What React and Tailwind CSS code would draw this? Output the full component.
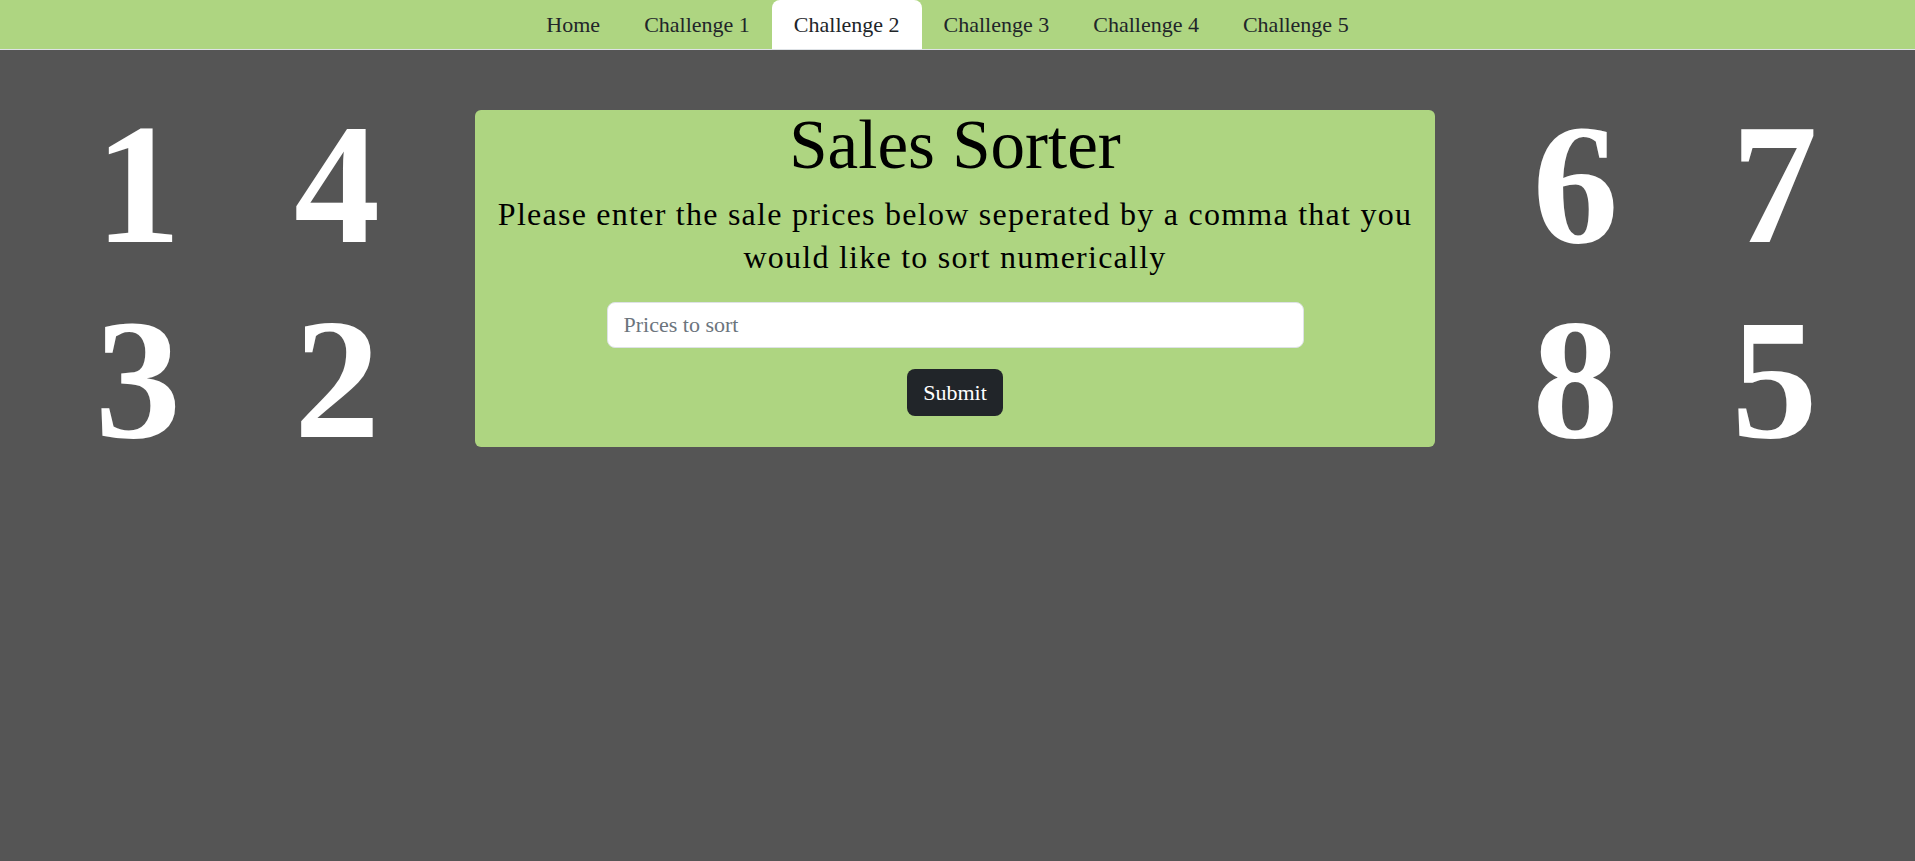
import React from 'react';

const tabs = ['Home', 'Challenge 1', 'Challenge 2', 'Challenge 3', 'Challenge 4', 'Challenge 5'];

const DigitGrid = ({ digits }) => (
    <div className="grid grid-cols-[199px_199px] text-center font-bold text-white text-[172px] leading-[195px]">
        {digits.map((d) => (
            <span key={d}>{d}</span>
        ))}
    </div>
);

const App = () => {
    return (
        <div className="min-h-screen bg-[#555555] font-['Liberation_Serif',serif]">
            <nav className="h-[50px] bg-[#aed581] border-b border-[#dee2e6] flex justify-center pr-5">
                {tabs.map((tab) => (
                    <a
                        key={tab}
                        href="#"
                        className={
                            tab === 'Challenge 2'
                                ? 'h-[49px] px-[22px] flex items-center text-[22px] text-[#212529] bg-white rounded-t-lg'
                                : 'h-[49px] px-[22px] flex items-center text-[22px] text-[#212529]'
                        }
                    >
                        {tab}
                    </a>
                ))}
            </nav>

            <main className="flex items-start pt-[37px]">
                <div className="w-[475px] flex justify-center">
                    <DigitGrid digits={['1', '4', '3', '2']} />
                </div>

                <div className="w-[960px] mt-[23px] bg-[#aed581] rounded-md px-3 pt-px pb-[31px] text-center text-black">
                    <h1 className="text-[69px] leading-[68px]">Sales Sorter</h1>
                    <p className="mt-[14px] text-[32px] leading-[43px] tracking-[1.25px]">
                        Please enter the sale prices below seperated by a comma that you
                        <br />
                        would like to sort numerically
                    </p>
                    <form className="flex flex-col items-center" onSubmit={(e) => e.preventDefault()}>
                        <input
                            type="text"
                            placeholder="Prices to sort"
                            className="mt-[23px] w-[697px] h-[46px] px-4 bg-white border border-[#dee2e6] rounded-lg text-[22px] text-[#212529] placeholder:text-[#6c757d] outline-none"
                        />
                        <button
                            type="submit"
                            className="mt-[21px] h-[47px] px-4 bg-[#212529] text-white text-[22px] rounded-lg"
                        >
                            Submit
                        </button>
                    </form>
                </div>

                <div className="flex-1 flex justify-center">
                    <DigitGrid digits={['6', '7', '8', '5']} />
                </div>
            </main>
        </div>
    );
};

export default App;
